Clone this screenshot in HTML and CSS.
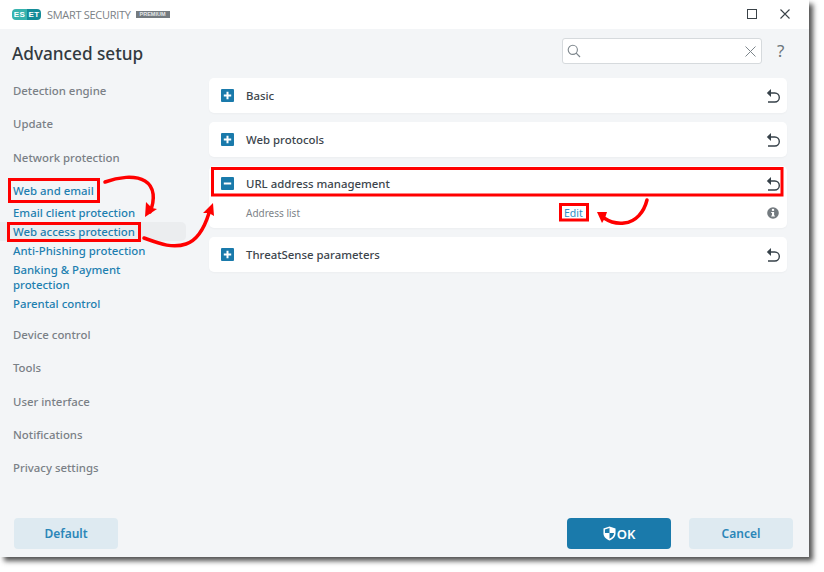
FILE: index.html
```html
<!DOCTYPE html>
<html lang="en">
<head>
<meta charset="utf-8">
<title>ESET Smart Security Premium - Advanced setup</title>
<link rel="stylesheet" href="styles.css">
</head>
<body>
<div class="window">
  <header class="titlebar">
    <div class="brand">
      <span class="logo"><span class="logo-left">ES</span><span class="logo-right">ET</span></span>
      <span class="product">SMART SECURITY</span>
      <span class="tier">PREMIUM</span>
    </div>
    <div class="winctl">
      <svg class="winicon" viewBox="0 0 10 10"><rect x="0.5" y="0.5" width="9" height="9" fill="none" stroke="#3a4248" stroke-width="1"/></svg>
      <svg class="winicon" viewBox="0 0 10 10"><path d="M0.5 0.5 9.5 9.5M9.5 0.5 0.5 9.5" fill="none" stroke="#3a4248" stroke-width="1.1"/></svg>
    </div>
  </header>
  <div class="headrow">
    <h1 class="title">Advanced setup</h1>
    <div class="searchwrap">
      <div class="search">
        <svg class="search-icon" viewBox="0 0 14 14"><circle cx="5.8" cy="5.8" r="4.6" fill="none" stroke="#7d868c" stroke-width="1.1"/><path d="M9.2 9.2 13 13" stroke="#7d868c" stroke-width="1.2"/></svg>
        <svg class="search-clear" viewBox="0 0 11 11"><path d="M0.5 0.5 10.5 10.5M10.5 0.5 0.5 10.5" stroke="#7d868c" stroke-width="1"/></svg>
      </div>
      <span class="help">?</span>
    </div>
  </div>
  <div class="body">
    <nav class="sidebar">
      <a class="nav-top">Detection engine</a>
      <a class="nav-top">Update</a>
      <a class="nav-top">Network protection</a>
      <a class="nav-top nav-open">Web and email</a>
      <div class="subnav">
        <a class="nav-sub">Email client protection</a>
        <a class="nav-sub nav-current">Web access protection</a>
        <a class="nav-sub">Anti-Phishing protection</a>
        <a class="nav-sub">Banking &amp; Payment protection</a>
        <a class="nav-sub">Parental control</a>
      </div>
      <a class="nav-top">Device control</a>
      <a class="nav-top">Tools</a>
      <a class="nav-top">User interface</a>
      <a class="nav-top">Notifications</a>
      <a class="nav-top">Privacy settings</a>
    </nav>
    <main class="panel">
      <section class="card">
        <div class="card-head">
          <svg class="toggle" viewBox="0 0 13 13"><rect width="13" height="13" rx="1" fill="#1a7aab"/><path d="M2.8 6.5h7.4M6.5 2.8v7.4" stroke="#fff" stroke-width="2"/></svg>
          <span class="card-title">Basic</span>
          <svg class="undo" viewBox="0 0 14 14"><path d="M4 4h4.800a4.500 4.500 0 0 1 0 9H2" fill="none" stroke="#37424a" stroke-width="1.4"/><path d="M5 0 0.800 4 5 8z" fill="#37424a"/></svg>
        </div>
      </section>
      <section class="card">
        <div class="card-head">
          <svg class="toggle" viewBox="0 0 13 13"><rect width="13" height="13" rx="1" fill="#1a7aab"/><path d="M2.8 6.5h7.4M6.5 2.8v7.4" stroke="#fff" stroke-width="2"/></svg>
          <span class="card-title">Web protocols</span>
          <svg class="undo" viewBox="0 0 14 14"><path d="M4 4h4.800a4.500 4.500 0 0 1 0 9H2" fill="none" stroke="#37424a" stroke-width="1.4"/><path d="M5 0 0.800 4 5 8z" fill="#37424a"/></svg>
        </div>
      </section>
      <section class="card">
        <div class="card-head">
          <svg class="toggle" viewBox="0 0 13 13"><rect width="13" height="13" rx="1" fill="#1a7aab"/><path d="M2.8 6.5h7.4" stroke="#fff" stroke-width="2"/></svg>
          <span class="card-title">URL address management</span>
          <svg class="undo" viewBox="0 0 14 14"><path d="M4 4h4.800a4.500 4.500 0 0 1 0 9H2" fill="none" stroke="#37424a" stroke-width="1.4"/><path d="M5 0 0.800 4 5 8z" fill="#37424a"/></svg>
        </div>
        <div class="card-row">
          <span class="row-label">Address list</span>
          <a class="row-link">Edit</a>
          <svg class="info" viewBox="0 0 12 12"><circle cx="6" cy="6" r="5.8" fill="#737a7f"/><rect x="4.9" y="1.9" width="2.2" height="2" fill="#fff"/><path d="M4.2 5h2.9v3.4h.8v1.1H4.2V8.4h.8V6.1h-.8z" fill="#fff"/></svg>
        </div>
      </section>
      <section class="card">
        <div class="card-head">
          <svg class="toggle" viewBox="0 0 13 13"><rect width="13" height="13" rx="1" fill="#1a7aab"/><path d="M2.8 6.5h7.4M6.5 2.8v7.4" stroke="#fff" stroke-width="2"/></svg>
          <span class="card-title">ThreatSense parameters</span>
          <svg class="undo" viewBox="0 0 14 14"><path d="M4 4h4.800a4.500 4.500 0 0 1 0 9H2" fill="none" stroke="#37424a" stroke-width="1.4"/><path d="M5 0 0.800 4 5 8z" fill="#37424a"/></svg>
        </div>
      </section>
    </main>
  </div>
  <footer class="footer">
    <button class="btn btn-light">Default</button>
    <div class="footer-right">
      <button class="btn btn-primary"><svg class="shield" viewBox="0 0 14 16"><path d="M7 0.5 13.500 2.600v5c0 3.800-2.800 6.400-6.500 7.900C3.300 14 .5 11.400.5 7.600v-5z" fill="#fff"/><path d="M7 2.100v5.400H2.100V3.700zM7 7.500h4.900c-.1 2.900-2.200 4.900-4.900 6.200z" fill="#1a7aab"/></svg>OK</button>
      <button class="btn btn-light">Cancel</button>
    </div>
  </footer>
</div>
<svg class="marks" viewBox="0 0 824 572" width="824" height="572">
  <g fill="none" stroke="#f00" stroke-width="3">
    <rect x="9.500" y="179.500" width="89" height="22"/>
    <rect x="8.500" y="223.500" width="131" height="17"/>
    <rect x="212.500" y="168.500" width="569.500" height="26.500"/>
    <rect x="560.500" y="204.500" width="27" height="15.500"/>
  </g>
  <g fill="none" stroke="#f00" stroke-width="3.500" stroke-linecap="round">
    <path d="M105 182C118 177 135 175 145 181C155 187 155 200 150 212"/>
    <path d="M144 238C158 243 172 249 186 244C198 240 205 226 209 213"/>
    <path d="M647 200C644 212 636 222 624 223C616 224 610 222 604 218"/>
  </g>
  <g fill="#f00">
    <path d="M145 217 146 202 152 208 157 209z"/>
    <path d="M213 203 203 213 209 213 214 216z"/>
    <path d="M597 212 607 212 605 218 602 223z"/>
  </g>
</svg>
</body>
</html>
```
FILE: styles.css
```css
* { box-sizing: border-box; }
html, body { margin: 0; padding: 0; }
body {
  width: 824px;
  height: 572px;
  background: #fff;
  position: relative;
  overflow: hidden;
  font-family: "Noto Sans", "Open Sans", sans-serif;
}
.window {
  width: 809px;
  height: 557px;
  background: #f3f5f7;
  box-shadow: 4px 4px 5px rgba(40, 40, 40, 0.8);
  display: flex;
  flex-direction: column;
}
.titlebar {
  height: 29px;
  flex: none;
  background: #fff;
  display: flex;
  align-items: center;
  justify-content: space-between;
  padding: 0 19px 1px 12px;
}
.brand { display: flex; align-items: center; }
.logo {
  width: 29px;
  height: 11px;
  border-radius: 4px;
  display: flex;
  overflow: hidden;
  font-family: "Liberation Sans", sans-serif;
  font-size: 8px;
  font-weight: 700;
  line-height: 11px;
  letter-spacing: 0.4px;
  text-align: center;
  color: #fff;
}
.logo-left { width: 15px; background: #37b3ae; }
.logo-right { flex: 1; background: #148c98; }
.product {
  margin-left: 6px;
  font-family: "Open Sans", sans-serif;
  font-size: 11px;
  letter-spacing: -0.3px;
  color: #7b8186;
}
.tier {
  margin-left: 5px;
  width: 34px;
  height: 7px;
  background: #747b80;
  color: #e6e8ea;
  font-family: "Liberation Sans", sans-serif;
  font-size: 5.500px;
  font-weight: 700;
  line-height: 7px;
  text-align: center;
}
.winctl { display: flex; gap: 23px; align-items: center; }
.winicon { width: 10px; height: 10px; display: block; }
.headrow {
  height: 49px;
  flex: none;
  display: flex;
  align-items: flex-start;
  justify-content: space-between;
  padding: 9px 23px 0 12px;
}
.title {
  margin: 1px 0 0;
  font-size: 17.200px;
  font-weight: 500;
  line-height: 30px;
  color: #323a40;
}
.searchwrap { display: flex; align-items: center; gap: 15px; }
.search {
  width: 200px;
  height: 26px;
  background: #fff;
  border: 1px solid #d6dadd;
  border-radius: 3px;
  display: flex;
  align-items: center;
  justify-content: space-between;
  padding: 0 5px 0 4px;
}
.search-icon { width: 14px; height: 14px; }
.search-clear { width: 11px; height: 11px; }
.help { font-size: 17px; font-weight: 400; line-height: 26px; color: #6c757b; width: 9px; }
.body { flex: 1; display: flex; min-height: 0; }
.sidebar {
  width: 186px;
  flex: none;
  display: flex;
  flex-direction: column;
  font-size: 11.400px;
  font-weight: 500;
}
.sidebar a { display: block; }
.nav-top {
  height: 33.400px;
  padding: 0 13px;
  color: #7a8086;
  line-height: 26px;
}
.nav-open { height: 25px; color: #1d7fb0; }
.subnav { display: flex; flex-direction: column; margin-bottom: 8.600px; }
.nav-sub {
  padding: 2px 13px;
  color: #1d7fb0;
  line-height: 15px;
}
.nav-current {
  background: #ebedef;
  border-radius: 0 5px 5px 0;
}
.panel {
  flex: 1;
  display: flex;
  flex-direction: column;
  gap: 9px;
  padding: 0 22px 0 23px;
}
.card {
  background: #fff;
  border-radius: 5px;
  box-shadow: 0 1px 2px rgba(0, 0, 0, 0.03);
}
.card-head {
  height: 35px;
  display: flex;
  align-items: center;
  padding: 0 7px 0 12px;
}
.toggle { width: 13px; height: 13px; flex: none; }
.card-title {
  margin: 0 0 1px 12px;
  font-size: 11.400px;
  font-weight: 500;
  color: #3c454c;
  flex: 1;
}
.undo { width: 14px; height: 14px; flex: none; }
.card-row {
  height: 27px;
  display: flex;
  align-items: center;
  padding: 0 8px 4px 37px;
  font-size: 10.500px;
}
.row-label { width: 318px; font-size: 10px; color: #7d8489; }
.row-link { color: #2f8fc4; flex: 1; }
.info { width: 12px; height: 12px; flex: none; }
.footer {
  height: 39px;
  flex: none;
  display: flex;
  justify-content: space-between;
  padding: 0 16px 0 14px;
}
.footer-right { display: flex; gap: 18px; }
.btn {
  width: 104px;
  height: 31px;
  border: 0;
  border-radius: 4px;
  font-family: "Noto Sans", sans-serif;
  font-size: 12px;
  font-weight: 600;
  padding: 0;
  display: flex;
  align-items: center;
  justify-content: center;
}
.btn-light { background: #deeaf1; color: #2b86b8; }
.btn-primary { background: #1a7aab; color: #fff; font-size: 13px; gap: 1px; }
.shield { width: 13px; height: 15px; }
.marks { position: absolute; left: 0; top: 0; pointer-events: none; }
```
